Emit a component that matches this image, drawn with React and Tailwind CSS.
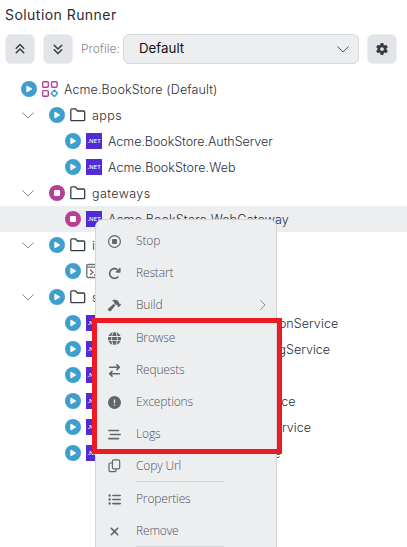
import {
  FaAnglesUp, FaAnglesDown, FaGear, FaRegCircleStop, FaArrowRotateRight, FaHammer, FaGlobe,
  FaArrowRightArrowLeft, FaCircleExclamation, FaBarsStaggered, FaListUl, FaXmark,
} from 'react-icons/fa6';

function Chevron({ className }) {
  return (
    <svg viewBox="0 0 12 7" className={className} fill="none" stroke="currentColor" strokeLinecap="round" strokeLinejoin="round">
      <path d="M.7.8 6 5.9 11.3.8" />
    </svg>
  );
}

function RunState({ running }) {
  return (
    <svg viewBox="0 0 16 16" className="size-4 shrink-0">
      <circle cx="8" cy="8" r="8" fill={running ? '#b83f96' : '#3f9fcc'} />
      {running
        ? <rect x="5" y="5" width="6" height="6" rx="1" fill="#fff" />
        : <path d="M5.8 5v6l5.1-3z" fill="#fff" stroke="#fff" strokeWidth=".8" strokeLinejoin="round" />}
    </svg>
  );
}

function SolutionIcon() {
  return (
    <svg viewBox="0 0 16 16" className="size-4 shrink-0" fill="none" stroke="#b83f96" strokeWidth="1.4">
      <rect x=".7" y=".7" width="5.6" height="5.6" rx="1" />
      <rect x="9.5" y=".7" width="5.6" height="5.6" rx="1" />
      <rect x=".7" y="9.6" width="5.6" height="5.6" rx="1" />
      <path d="M12.4 9.1 15.6 12.4 12.4 15.6 9.1 12.4z" stroke="#3f9fcc" strokeLinejoin="round" />
    </svg>
  );
}

function FolderIcon() {
  return (
    <svg viewBox="0 0 16 14" className="h-3.5 w-4 shrink-0" fill="none" stroke="#343a46" strokeWidth="1.3" strokeLinejoin="round">
      <path d="M.8 12V2q0-1.2 1.2-1.2H5.4L7.4 3H13.4q1.3 0 1.3 1.3V11.4q0 1.3-1.3 1.3H1.9Q.8 12.7.8 12z" />
    </svg>
  );
}

function NetIcon() {
  return (
    <span className="flex size-4 shrink-0 items-center justify-center bg-[#512bd4] font-['Open_Sans',sans-serif] text-[6px] font-semibold leading-none text-white">
      .NET
    </span>
  );
}

function TerminalIcon() {
  return (
    <svg viewBox="0 0 16 16" className="size-4 shrink-0" fill="none" stroke="#6f6f72" strokeWidth="1.3">
      <rect x=".8" y="1.5" width="14.4" height="13" rx="1" />
      <path d="M1 4.2h14M4 6.5l3 2.7-3 2.6M8 12h4" />
    </svg>
  );
}

function CopyIcon() {
  return (
    <svg viewBox="0 0 13 14" className="h-3.5 w-[13px]" fill="none" stroke="currentColor" strokeWidth="1.2" strokeLinejoin="round">
      <rect x="4.4" y=".8" width="7.3" height="9" rx="1.4" />
      <path d="M4.2 4H2.3Q1 4 1 5.3v6Q1 12.7 2.4 12.7h4.2Q8 12.7 8 11.4V10" />
    </svg>
  );
}

const tree = [
  ['root', 'Acme.BookStore (Default)', 'tracking-[0.12px]'],
  ['folder', 'apps', 'tracking-[0.45px]'],
  ['net', 'Acme.BookStore.AuthServer', 'tracking-[-0.04px]'],
  ['net', 'Acme.BookStore.Web', 'tracking-[0.04px]'],
  ['folder', 'gateways', 'tracking-[0.4px]', true],
  ['net', 'Acme.BookStore.WebGateway', 'tracking-[0.14px]', true],
  ['folder', 'infrastructure', 'tracking-normal'],
  ['docker', 'docker-dependencies', 'tracking-normal'],
  ['folder', 'services', 'tracking-normal'],
  ['net', 'Acme.BookStore.AdministrationService', 'tracking-[0.08px]'],
  ['net', 'Acme.BookStore.AuditLoggingService', 'tracking-[0.01px]'],
  ['net', 'Acme.BookStore.GdprService', 'tracking-[-0.2px]'],
  ['net', 'Acme.BookStore.IdentityService', 'tracking-[0px]'],
  ['net', 'Acme.BookStore.LanguageService', 'tracking-[0.02px]'],
  ['net', 'Acme.BookStore.SaasService', 'tracking-[0px]'],
];

const indents = { root: 'pl-[21px]', folder: 'pl-[22px]', net: 'pl-[65px]', docker: 'pl-[65px]' };
const icons = { root: SolutionIcon, folder: FolderIcon, net: NetIcon, docker: TerminalIcon };

function TreeRow({ row }) {
  const [kind, label, tracking, running] = row;
  const Icon = icons[kind];
  const selected = label.endsWith('WebGateway');
  return (
    <div className={`flex h-[26px] items-center ${indents[kind]} ${selected ? 'bg-[#edeef0]' : ''}`}>
      {kind === 'folder' && <Chevron className="mr-[15px] h-[7px] w-3 shrink-0 text-[#858589]" />}
      <RunState running={running} />
      <span className="ml-[5px] flex"><Icon /></span>
      <span className={`ml-1.5 whitespace-nowrap pt-0.5 ${tracking}`}>{label}</span>
    </div>
  );
}

const menu = [
  [FaRegCircleStop, 'Stop'],
  [FaArrowRotateRight, 'Restart'],
  [FaHammer, 'Build', true],
  [FaGlobe, 'Browse'],
  [FaArrowRightArrowLeft, 'Requests'],
  [FaCircleExclamation, 'Exceptions'],
  [FaBarsStaggered, 'Logs'],
  [CopyIcon, 'Copy Url', true],
  [FaListUl, 'Properties'],
  [FaXmark, 'Remove', true],
];

function MenuItem({ item }) {
  const [Icon, label, divided] = item;
  return (
    <>
      <div className="flex h-8 items-center pl-3 pr-3">
        <span className="flex w-[13px] justify-center text-[13px] text-[#62656b]"><Icon /></span>
        <span className="ml-[15px]">{label}</span>
        {label === 'Build' && <Chevron className="-mr-1 ml-auto h-1.5 w-2.5 -rotate-90 text-[#77797e]" />}
      </div>
      {divided && <div className="-mt-px mb-px ml-10 h-px w-[88px] bg-[#d3d4d8]" />}
    </>
  );
}

const button = 'flex h-[30px] w-[30px] items-center justify-center rounded-md border border-[#eceef1] bg-[#e3e4e8] text-[#343a46]';

export default function App() {
  return (
    <main className="relative h-[547px] w-[407px] overflow-hidden bg-white font-['Inter',sans-serif] text-[12.5px] font-light text-[#292d39]">
      <h1 className="pl-[5px] pt-1 text-[14px] font-normal leading-[22px] tracking-[0.45px] text-[#292d33]">Solution Runner</h1>
      <header className="mt-2 flex items-center pl-[5px]">
        <button className={button}><FaAnglesUp size={12} /></button>
        <button className={`${button} ml-2`}><FaAnglesDown size={12} /></button>
        <span className="ml-2 w-[42px] whitespace-nowrap text-[12px] text-[#85858a]">Profile:</span>
        <div className="flex h-[30px] w-[236px] items-center justify-between rounded-md border border-[#d5d8df] bg-[#edeef0] pl-[15px] pr-[9px] text-[13.3px] font-normal text-[#111216]">
          Default
          <Chevron className="h-[7px] w-3 text-[#55575c]" />
        </div>
        <button className={`${button} ml-2`}><FaGear size={12} /></button>
      </header>
      <div className="mt-3">
        {tree.map((row) => <TreeRow key={row[1]} row={row} />)}
      </div>
      <nav className="absolute left-[95px] top-[219px] h-[360px] w-[182px] rounded-lg border border-[#d3d5dd] bg-[#edeef0] pt-[5px] font-['Open_Sans',sans-serif] text-[12px] tracking-[-0.15px] text-[#505259]">
        {menu.map((item) => <MenuItem key={item[1]} item={item} />)}
      </nav>
      <div className="absolute left-[92px] top-[318px] h-[136px] w-[190px] border-[5px] border-[#ed1c24]" />
    </main>
  );
}
